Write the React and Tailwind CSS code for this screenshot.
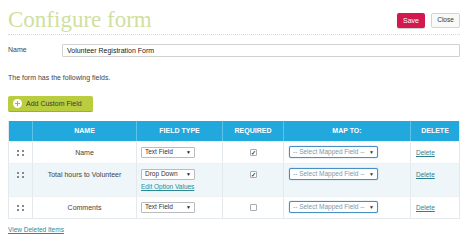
import { Plus } from 'lucide-react'

const font = { fontFamily: '"Liberation Sans", Arial, sans-serif' }

function Select({ label, wide }) {
    if (wide) {
        return (
            <div className="flex items-center justify-between w-[89px] h-[12px] border border-[#4a8fc4] rounded-[2px] bg-white px-[3px] shadow-[0_0_1px_#4a8fc4]">
                <span className="text-[6.5px] text-[#7d98ad] leading-none whitespace-nowrap">-- Select Mapped Field --</span>
                <span className="text-[5px] text-[#333] leading-none">▼</span>
            </div>
        )
    }
    return (
        <div className="flex items-center justify-between w-[54px] h-[11px] border border-[#bbb] rounded-[1px] bg-white px-[3px]">
            <span className="text-[6.5px] text-[#333] leading-none">{label}</span>
            <span className="text-[5px] text-[#222] leading-none">▼</span>
        </div>
    )
}

function Check({ checked }) {
    return (
        <div className="w-[7px] h-[7px] border border-[#aaa] rounded-[1px] bg-white flex items-center justify-center">
            {checked && <span className="text-[6px] leading-none text-[#333] font-bold">✓</span>}
        </div>
    )
}

function Handle() {
    return (
        <div className="flex flex-col gap-[2px]">
            <div className="flex gap-[3px]">
                <span className="w-[2px] h-[2px] bg-[#888]" />
                <span className="w-[2px] h-[2px] bg-[#888]" />
            </div>
            <div className="flex gap-[3px]">
                <span className="w-[2px] h-[2px] bg-[#888]" />
                <span className="w-[2px] h-[2px] bg-[#888]" />
            </div>
        </div>
    )
}

const rows = [
    { name: 'Name', type: 'Text Field', req: true, h: 'h-[22px]', alt: false },
    { name: 'Total hours to Volunteer', type: 'Drop Down', req: true, h: 'h-[33px]', alt: true, edit: true },
    { name: 'Comments', type: 'Text Field', req: false, h: 'h-[22px]', alt: false },
]

export default function App() {
    return (
        <div className="w-[474px] h-[252px] bg-white px-2 overflow-hidden" style={font}>
            <div className="flex items-start justify-between h-[35px] w-[452px] border-b border-dotted border-[#d8d8d8]">
                <h1
                    className="pt-[8px] text-[23px] leading-[23px] text-[#cfdf9f]"
                    style={{ fontFamily: '"Liberation Serif", "Times New Roman", serif' }}
                >
                    Configure form
                </h1>
                <div className="flex gap-[6px] mt-[13px]">
                    <button className="w-[28px] h-[15px] bg-[#d3184f] rounded-[2px] text-white text-[7px] leading-none shadow-[0_1px_1px_rgba(0,0,0,0.2)]">
                        Save
                    </button>
                    <button className="w-[29px] h-[15px] bg-[#f9f9f9] border border-[#d4d4d4] rounded-[2px] text-[#333] text-[6.5px] leading-none">
                        Close
                    </button>
                </div>
            </div>

            <div className="flex items-center mt-[9px] w-[452px]">
                <span className="w-[54px] text-[7px] text-[#444]">Name</span>
                <div className="flex-1 h-[13px] border border-[#d0d0d0] rounded-[1px] flex items-center px-[4px]">
                    <span className="text-[7px] text-[#222] leading-none">Volunteer Registration Form</span>
                </div>
            </div>

            <p className="mt-[16px] text-[7px] leading-[9px] text-[#444]">The form has the following fields.</p>

            <button className="mt-[14px] flex items-center gap-[4px] w-[85px] h-[16px] px-[5px] bg-[#b9cd3f] rounded-[2px] border-b border-[#9caf2e]">
                <span className="w-[9px] h-[9px] rounded-full bg-white flex items-center justify-center">
                    <Plus className="w-[7px] h-[7px] text-[#a3b834]" strokeWidth={4} />
                </span>
                <span className="text-[7px] text-[#3a3a3a] leading-none whitespace-nowrap">Add Custom Field</span>
            </button>

            <div className="mt-[9px] w-[452px] border-b border-x border-[#e3e9ec]">
                <div className="flex h-[20px] bg-[#21a8dc] text-white text-[7px] font-bold">
                    <div className="w-[24px] border-r border-[#5cc2e8]" />
                    <div className="w-[104px] flex items-center justify-center border-r border-[#5cc2e8]">NAME</div>
                    <div className="w-[86px] flex items-center justify-center border-r border-[#5cc2e8]">FIELD TYPE</div>
                    <div className="w-[61px] flex items-center justify-center border-r border-[#5cc2e8]">REQUIRED</div>
                    <div className="w-[127px] flex items-center justify-center border-r border-[#5cc2e8]">MAP TO:</div>
                    <div className="flex-1 flex items-center justify-center">DELETE</div>
                </div>
                {rows.map((r) => (
                    <div
                        key={r.name}
                        className={`flex ${r.h} ${r.alt ? 'bg-[#eef6f9]' : 'bg-white'} border-t border-[#edf1f3] text-[7px] text-[#444]`}
                    >
                        <div className="w-[24px] border-r border-[#e3e9ec] flex justify-center pt-[8px]">
                            <Handle />
                        </div>
                        <div className="w-[104px] border-r border-[#e3e9ec] flex justify-center pt-[6px] leading-[9px]">
                            {r.name}
                        </div>
                        <div className="w-[86px] border-r border-[#e3e9ec] pl-[4px] pt-[5px]">
                            <Select label={r.type} />
                            {r.edit && (
                                <div className="mt-[2px] text-[6.5px] text-[#2c8a95] underline leading-[9px]">Edit Option Values</div>
                            )}
                        </div>
                        <div className="w-[61px] border-r border-[#e3e9ec] flex justify-center pt-[7px]">
                            <Check checked={r.req} />
                        </div>
                        <div className="w-[127px] border-r border-[#e3e9ec] pl-[5px] pt-[4px]">
                            <Select wide />
                        </div>
                        <div className="flex-1 pl-[5px] pt-[6px] text-[6.5px] text-[#2c7f8c] underline leading-[9px]">Delete</div>
                    </div>
                ))}
            </div>

            <div className="mt-[6px] text-[6.5px] leading-[9px] text-[#2c8a95] underline">View Deleted Items</div>
        </div>
    )
}
